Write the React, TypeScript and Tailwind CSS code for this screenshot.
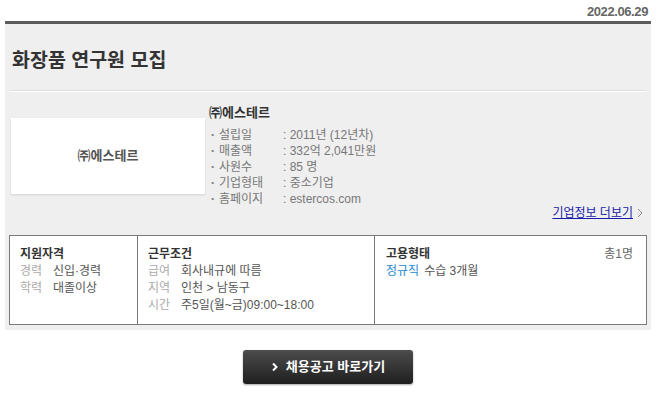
import React from "react";

const info: [string, string][] = [
  ["설립일", ": 2011년 (12년차)"],
  ["매출액", ": 332억 2,041만원"],
  ["사원수", ": 85 명"],
  ["기업형태", ": 중소기업"],
  ["홈페이지", ": estercos.com"],
];

export default function App() {
  return (
    <div className="w-[656px] h-[420px] bg-white font-['Liberation_Sans','Noto_Sans_CJK_KR',sans-serif] text-[12px]">
      <div className="h-[21px] flex justify-end pr-[8px] pt-[4px]">
        <span className="text-[13px] leading-[16px] font-bold text-[#666] tracking-[-0.4px]">2022.06.29</span>
      </div>
      <div className="mx-[5px] h-[309px] border-t-[3px] border-[#5b5b5b] bg-[#efefef]">
        <div className="pt-[24px] pb-[18px] px-[7px]">
          <h1 className="text-[19.5px] leading-[24px] font-bold text-[#333]">화장품 연구원 모집</h1>
        </div>
        <div className="mx-[5px] border-t border-[#dcdcdc] border-b border-b-white" />
        <div className="flex items-start h-[113px]">
          <div className="ml-[6px] mt-[26px] w-[194px] h-[76px] bg-white shadow-[0_1px_2px_rgba(0,0,0,0.12)] flex items-center justify-center">
            <span className="text-[13px] font-bold text-[#555] leading-[16px]">㈜에스테르</span>
          </div>
          <div className="ml-[4px] pt-[13px]">
            <div className="text-[13px] font-bold text-[#333] leading-[16px]">㈜에스테르</div>
            <ul className="mt-[6px]">
              {info.map(([k, v]) => (
                <li key={k} className="flex leading-[16px] text-[#777] text-[12px]">
                  <span className="w-[10px] pl-[2px] font-bold">·</span>
                  <span className="w-[64px]">{k}</span>
                  <span>{v}</span>
                </li>
              ))}
            </ul>
          </div>
        </div>
        <div className="flex justify-end items-center pr-[7px] h-[16px] leading-[16px]">
          <a className="text-[12px] text-[#1a1aa8] underline">기업정보 더보기</a>
          <svg width="8" height="10" viewBox="0 0 8 10" className="ml-[3px]">
            <path d="M2 1 L6 5 L2 9" fill="none" stroke="#888" strokeWidth="1" />
          </svg>
        </div>
        <div className="mt-[14px] ml-[4px] w-[638px] h-[90px] border border-[#7a7a7a] bg-white grid grid-cols-[127px_237px_1fr]">
          <div className="pl-[10px] pt-[10px] leading-[17px]">
            <div className="font-bold text-[#333] text-[12px]">지원자격</div>
            <div className="flex"><span className="w-[33px] text-[#aaa]">경력</span><span className="text-[#555]">신입·경력</span></div>
            <div className="flex"><span className="w-[33px] text-[#aaa]">학력</span><span className="text-[#555]">대졸이상</span></div>
          </div>
          <div className="border-l border-[#7a7a7a] pl-[10px] pt-[10px] leading-[17px]">
            <div className="font-bold text-[#333] text-[12px]">근무조건</div>
            <div className="flex"><span className="w-[33px] text-[#aaa]">급여</span><span className="text-[#555]">회사내규에 따름</span></div>
            <div className="flex"><span className="w-[33px] text-[#aaa]">지역</span><span className="text-[#555]">인천 &gt; 남동구</span></div>
            <div className="flex"><span className="w-[33px] text-[#aaa]">시간</span><span className="text-[#555]">주5일(월~금)09:00~18:00</span></div>
          </div>
          <div className="border-l border-[#7a7a7a] pl-[11px] pr-[13px] pt-[10px] leading-[17px]">
            <div className="flex justify-between">
              <span className="font-bold text-[#333]">고용형태</span>
              <span className="text-[#666]">총1명</span>
            </div>
            <div>
              <span className="text-[#1f8ad2]">정규직</span>
              <span className="text-[#555] ml-[5px]">수습 3개월</span>
            </div>
          </div>
        </div>
      </div>
      <div className="flex justify-center mt-[20px]">
        <button className="w-[170px] h-[34px] rounded-[3px] bg-gradient-to-b from-[#4d4d4d] to-[#1f1f1f] shadow-[0_1px_2px_rgba(0,0,0,0.35)] flex items-center justify-center text-white font-bold text-[13px]">
          <svg width="8" height="10" viewBox="0 0 8 10" className="mr-[7px]">
            <path d="M2 1.5 L5.5 5 L2 8.5" fill="none" stroke="#fff" strokeWidth="2" />
          </svg>
          채용공고 바로가기
        </button>
      </div>
    </div>
  );
}
